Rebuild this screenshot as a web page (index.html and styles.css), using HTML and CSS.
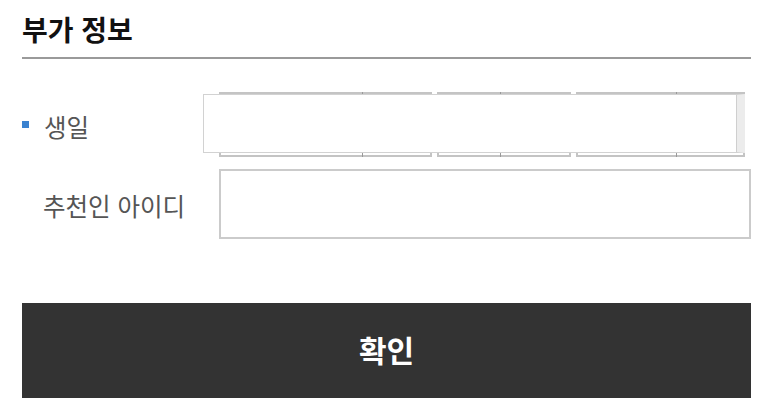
FILE: index.html
```html
<!DOCTYPE html>
<html lang="ko">
<head>
<meta charset="utf-8">
<link rel="stylesheet" href="styles.css">
</head>
<body>
<div class="page">
  <h2 class="title">부가 정보</h2>
  <div class="form">
    <div class="row row-birth">
      <div class="label"><span class="bullet"></span>생일</div>
      <div class="field birth">
        <div class="sel sel-year"><span class="tick t1"></span></div>
        <div class="sel sel-month"><span class="tick t2"></span></div>
        <div class="sel sel-day"><span class="tick t3"></span></div>
        <div class="overlay"></div>
      </div>
    </div>
    <div class="row row-rec">
      <div class="label plain">추천인 아이디</div>
      <div class="field"><div class="textbox"></div></div>
    </div>
  </div>
  <button class="confirm">확인</button>
</div>
</body>
</html>
```
FILE: styles.css
```css
* { box-sizing: border-box; }
html, body { margin: 0; padding: 0; background: #fff; }
body { font-family: "Noto Sans CJK KR", "Noto Sans", sans-serif; }
.page { width: 773px; padding: 0 22px; }
.title {
  margin: 0;
  font-size: 28px;
  font-weight: 700;
  color: #111;
  line-height: 38px;
  padding-top: 10px;
  padding-bottom: 9px;
  border-bottom: 2px solid #9a9a9a;
}
.form { padding-top: 33px; }
.row { display: flex; align-items: center; }
.label {
  width: 197px;
  font-size: 24.5px;
  color: #555;
  display: flex;
  align-items: center;
  padding-top: 3px;
}
.label.plain { padding-left: 21px; }
.bullet {
  width: 7px; height: 7px;
  background: #3a82d0;
  margin-right: 15px;
  margin-top: -4px;
}
.row-birth { height: 65px; }
.field { flex: 1; }
.birth {
  position: relative;
  display: flex;
  height: 65px;
  width: 526px;
  flex: none;
}
.sel {
  position: relative;
  height: 65px;
  border: 2px solid #c4c4c4;
  background: #fff;
}
.sel-year { width: 213px; margin-right: 5px; }
.sel-month { width: 134px; margin-right: 5px; }
.sel-day { width: 169px; }
.tick {
  position: absolute;
  top: -2px; bottom: -2px;
  width: 1px;
  background: #999;
}
.t1 { left: 141px; }
.t2 { left: 61px; }
.t3 { left: 98px; }
.overlay {
  position: absolute;
  left: -16px;
  top: 2px;
  width: 542px;
  height: 59px;
  background: #fff;
  border: 1px solid #d2d2d2;
  border-right: 8px solid #ececec;
  box-shadow: inset -1px 0 0 #cfcfcf;
}
.row-rec { margin-top: 12px; height: 70px; }
.textbox {
  width: 532px;
  height: 70px;
  border: 2px solid #cbcbcb;
  background: #fff;
}
.confirm {
  display: block;
  margin-top: 64px;
  width: 729px;
  height: 95px;
  border: 0;
  background: #333333;
  color: #fff;
  font-family: "Noto Sans CJK KR", "Noto Sans", sans-serif;
  font-size: 30px;
  font-weight: 700;
  padding: 0 0 4px 0;
}
```
